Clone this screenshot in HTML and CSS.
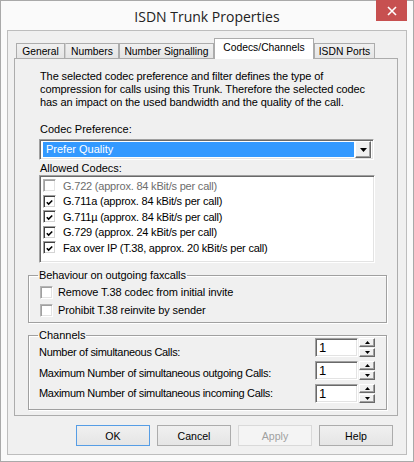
FILE: index.html
```html
<!DOCTYPE html>
<html>
<head>
<meta charset="utf-8">
<link rel="stylesheet" href="styles.css">
</head>
<body>
<div class="window">
  <div class="titlebar">
    <div class="title">ISDN Trunk Properties</div>
    <div class="close"><svg width="10" height="10" viewBox="0 0 10 10"><path d="M1 1 L9 9 M9 1 L1 9" stroke="#fff" stroke-width="1.6" fill="none"/></svg></div>
  </div>
  <div class="client">
    <div class="tabs">
      <div class="tab t-general">General</div>
      <div class="tab t-numbers">Numbers</div>
      <div class="tab t-signal">Number Signalling</div>
      <div class="tab t-codecs active">Codecs/Channels</div>
      <div class="tab t-ports">ISDN Ports</div>
    </div>
    <div class="panel">
      <p class="desc">The selected codec preference and filter defines the type of<br>compression for calls using this Trunk. Therefore the selected codec<br>has an impact on the used bandwidth and the quality of the call.</p>
      <div class="label label-pref">Codec Preference:</div>
      <div class="combo">
        <div class="combo-value">Prefer Quality</div>
        <div class="combo-btn"><svg width="7" height="4" viewBox="0 0 7 4"><path d="M0 0 H7 L3.5 4 Z" fill="#000"/></svg></div>
      </div>
      <div class="label label-codecs">Allowed Codecs:</div>
      <div class="listbox">
        <div class="item disabled"><span class="cb light"></span><span>G.722 (approx. 84 kBit/s per call)</span></div>
        <div class="item"><span class="cb"><svg width="9" height="9" viewBox="0 0 9 9"><path d="M1 4.2 L3.4 6.6 L8 2" stroke="#000" stroke-width="2" fill="none"/></svg></span><span>G.711a (approx. 84 kBit/s per call)</span></div>
        <div class="item"><span class="cb"><svg width="9" height="9" viewBox="0 0 9 9"><path d="M1 4.2 L3.4 6.6 L8 2" stroke="#000" stroke-width="2" fill="none"/></svg></span><span>G.711µ (approx. 84 kBit/s per call)</span></div>
        <div class="item"><span class="cb"><svg width="9" height="9" viewBox="0 0 9 9"><path d="M1 4.2 L3.4 6.6 L8 2" stroke="#000" stroke-width="2" fill="none"/></svg></span><span>G.729 (approx. 24 kBit/s per call)</span></div>
        <div class="item"><span class="cb"><svg width="9" height="9" viewBox="0 0 9 9"><path d="M1 4.2 L3.4 6.6 L8 2" stroke="#000" stroke-width="2" fill="none"/></svg></span><span>Fax over IP (T.38, approx. 20 kBit/s per call)</span></div>
      </div>
      <fieldset class="group group-fax">
        <legend>Behaviour on outgoing faxcalls</legend>
        <div class="check-row"><span class="cb light"></span><span>Remove T.38 codec from initial invite</span></div>
        <div class="check-row"><span class="cb light"></span><span>Prohibit T.38 reinvite by sender</span></div>
      </fieldset>
      <fieldset class="group group-channels">
        <legend>Channels</legend>
        <div class="channels-body">
          <div class="ch-labels">
            <div>Number of simultaneous Calls:</div>
            <div>Maximum Number of simultaneous outgoing Calls:</div>
            <div>Maximum Number of simultaneous incoming Calls:</div>
          </div>
          <div class="ch-spins">
            <div class="spin"><div class="spin-edit">1</div><div class="spin-btns"><div class="sb"><svg width="5" height="3" viewBox="0 0 5 3"><path d="M0 3 H5 L2.5 0 Z" fill="#000"/></svg></div><div class="sb"><svg width="5" height="3" viewBox="0 0 5 3"><path d="M0 0 H5 L2.5 3 Z" fill="#000"/></svg></div></div></div>
            <div class="spin"><div class="spin-edit">1</div><div class="spin-btns"><div class="sb"><svg width="5" height="3" viewBox="0 0 5 3"><path d="M0 3 H5 L2.5 0 Z" fill="#000"/></svg></div><div class="sb"><svg width="5" height="3" viewBox="0 0 5 3"><path d="M0 0 H5 L2.5 3 Z" fill="#000"/></svg></div></div></div>
            <div class="spin"><div class="spin-edit">1</div><div class="spin-btns"><div class="sb"><svg width="5" height="3" viewBox="0 0 5 3"><path d="M0 3 H5 L2.5 0 Z" fill="#000"/></svg></div><div class="sb"><svg width="5" height="3" viewBox="0 0 5 3"><path d="M0 0 H5 L2.5 3 Z" fill="#000"/></svg></div></div></div>
          </div>
        </div>
      </fieldset>
    </div>
    <div class="buttons">
      <div class="btn default">OK</div>
      <div class="btn">Cancel</div>
      <div class="btn disabled">Apply</div>
      <div class="btn">Help</div>
    </div>
  </div>
</div>
</body>
</html>
```

FILE: styles.css
```css
* { box-sizing: border-box; }
body {
  margin: 0;
  font-family: "Liberation Sans", Arial, sans-serif;
  font-size: 11px;
  color: #000;
  background: #fff;
}
.window {
  width: 414px;
  height: 462px;
  border: 1px solid #a9a9a9;
  background: #fafafa;
  padding: 0 6px 6px 6px;
  display: flex;
  flex-direction: column;
  position: relative;
}
.titlebar {
  height: 29px;
  flex: none;
  display: flex;
  align-items: center;
  justify-content: center;
}
.title {
  font-family: "Open Sans", "Noto Sans", sans-serif;
  font-size: 14px;
  color: #222;
  margin-top: 1px;
}
.close {
  position: absolute;
  top: -1px;
  left: 375px;
  width: 31px;
  height: 21px;
  background: #c75050;
  display: flex;
  align-items: center;
  justify-content: center;
}
.client {
  flex: 1;
  border: 1px solid #bdbdbd;
  background: #f0f0f0;
  padding: 7px 8px 0 6px;
  display: flex;
  flex-direction: column;
}
.tabs {
  display: flex;
  height: 20px;
  padding-left: 2px;
  align-items: flex-end;
  font-size: 10.3px;
  position: relative;
  z-index: 1;
}
.tab {
  height: 15px;
  border: 1px solid #acacac;
  border-bottom: none;
  background: linear-gradient(#f0f0f0, #e5e5e5);
  display: flex;
  align-items: center;
  justify-content: center;
  padding-top: 1px;
}
.t-general { width: 49px; }
.t-numbers { width: 54px; border-left-color: #d0d0d0; }
.t-signal { width: 95px; }
.t-codecs { width: 100px; }
.t-ports { width: 61px; }
.tab.active {
  height: 21px;
  background: #fff;
  margin-bottom: -1px;
  padding-top: 0;
  padding-bottom: 3px;
}
.panel {
  width: 384px;
  height: 358px;
  border: 1px solid #acacac;
  background: #f0f0f0;
  flex: none;
}
.desc {
  margin: 11px 0 0 25px;
  line-height: 13px;
  letter-spacing: -0.1px;
}
.label {
  margin-left: 25px;
  line-height: 13px;
}
.label-pref { margin-top: 14px; }
.label-codecs { margin-top: 2px; }
.combo {
  margin: 3px 0 0 24px;
  width: 335px;
  height: 21px;
  display: flex;
  border: 1px solid;
  border-color: #a0a0a0 #fff #fff #a0a0a0;
  box-shadow: inset 1px 1px #696969, inset -1px -1px #e3e3e3;
  background: #fff;
  padding: 2px;
}
.combo-value {
  flex: 1;
  background: #3399ff;
  color: #fff;
  padding-left: 3px;
  line-height: 15px;
  margin: 0 1px;
}
.combo-btn {
  width: 16px;
  background: #f0f0f0;
  border: 1px solid;
  border-color: #fff #696969 #696969 #fff;
  box-shadow: inset -1px -1px #a0a0a0;
  display: flex;
  align-items: center;
  justify-content: center;
  margin: -1px 0;
}
.listbox {
  margin: 0 0 0 24px;
  width: 336px;
  height: 88px;
  border: 1px solid;
  border-color: #a0a0a0 #fff #fff #a0a0a0;
  box-shadow: inset 1px 1px #696969, inset -1px -1px #e3e3e3;
  background: #fff;
  padding: 2px 0 0 3px;
  letter-spacing: -0.2px;
}
.item {
  height: 15.5px;
  display: flex;
  align-items: center;
  gap: 7px;
}
.item.disabled { color: #6d6d6d; }
.cb {
  width: 13px;
  height: 13px;
  flex: none;
  border: 1px solid;
  border-color: #a0a0a0 #fff #fff #a0a0a0;
  box-shadow: inset 1px 1px #404040, inset -1px -1px #d4d4d4;
  background: #fff;
  padding: 2px;
  display: flex;
}
.cb.light {
  border-color: #b5b5b5 #fff #fff #b5b5b5;
  box-shadow: inset 1px 1px #a0a0a0, inset -1px -1px #e3e3e3;
}
.group {
  margin: 6px 0 0 13px;
  width: 359px;
  padding: 0;
  border: 1px solid #a0a0a0;
  box-shadow: 1px 1px 0 #fff, inset 1px 1px 0 #fff;
  min-width: 0;
}
.group legend {
  margin-left: 9px;
  padding: 0 1px;
  line-height: 13px;
}
.group-fax { padding-bottom: 3px; letter-spacing: -0.1px; }
.check-row {
  height: 18px;
  display: flex;
  align-items: center;
  gap: 5px;
  margin-left: 11px;
}
.check-row:first-of-type { margin-top: 1px; }
.group-channels { padding-bottom: 5px; }
.channels-body {
  display: flex;
  justify-content: space-between;
  padding: 0 11px 0 10px;
}
.ch-labels {
  line-height: 20.5px;
  letter-spacing: -0.3px;
}
.ch-spins {
  display: flex;
  flex-direction: column;
  gap: 4px;
  margin-top: -4px;
}
.spin {
  display: flex;
  height: 19px;
  gap: 1px;
}
.spin-edit {
  width: 43px;
  height: 19px;
  border: 1px solid;
  border-color: #a0a0a0 #fff #fff #a0a0a0;
  box-shadow: inset 1px 1px #696969, inset -1px -1px #e3e3e3;
  background: #fff;
  font-size: 13px;
  line-height: 15px;
  padding: 1px 0 0 3px;
}
.spin-btns {
  width: 16px;
  display: flex;
  flex-direction: column;
  gap: 1px;
}
.sb {
  flex: 1;
  background: #f0f0f0;
  border: 1px solid;
  border-color: #fff #696969 #696969 #fff;
  box-shadow: inset -1px -1px #a0a0a0;
  display: flex;
  align-items: center;
  justify-content: center;
}
.buttons {
  display: flex;
  justify-content: flex-end;
  gap: 7px;
  margin-top: 9px;
  padding-right: 5px;
}
.btn {
  width: 74px;
  height: 21px;
  border: 1px solid #acacac;
  background: linear-gradient(#f0f0f0, #e5e5e5);
  display: flex;
  align-items: center;
  justify-content: center;
  font-size: 10.6px;
}
.btn.default { border-color: #569de5; }
.btn.disabled { border-color: #d9d9d9; background: #f4f4f4; color: #a0a0a0; }
```
